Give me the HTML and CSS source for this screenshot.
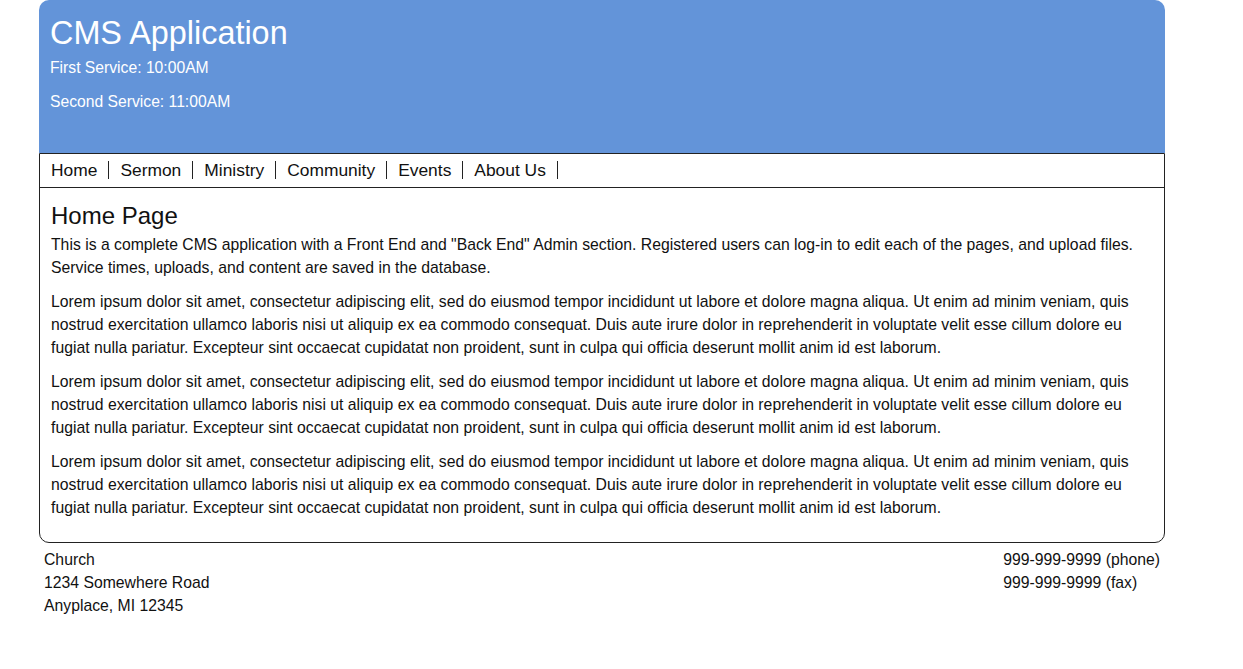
FILE: index.html
```html
<!DOCTYPE html>
<html lang="en">
<head>
<meta charset="utf-8">
<title>CMS Application</title>
<link rel="stylesheet" href="styles.css">
</head>
<body>
<div class="page">
  <header class="masthead">
    <h1 class="site-title">CMS Application</h1>
    <p class="service">First Service: 10:00AM</p>
    <p class="service">Second Service: 11:00AM</p>
  </header>
  <div class="frame">
    <nav class="menu">
      <a class="menu-item" href="#">Home</a><a class="menu-item" href="#">Sermon</a><a class="menu-item" href="#">Ministry</a><a class="menu-item" href="#">Community</a><a class="menu-item" href="#">Events</a><a class="menu-item" href="#">About Us</a>
    </nav>
    <main class="content">
      <h2 class="page-title">Home Page</h2>
      <p class="text">This is a complete CMS application with a Front End and "Back End" Admin section. Registered users can log-in to edit each of the pages, and upload files. Service times, uploads, and content are saved in the database.</p>
      <p class="text">Lorem ipsum dolor sit amet, consectetur adipiscing elit, sed do eiusmod tempor incididunt ut labore et dolore magna aliqua. Ut enim ad minim veniam, quis nostrud exercitation ullamco laboris nisi ut aliquip ex ea commodo consequat. Duis aute irure dolor in reprehenderit in voluptate velit esse cillum dolore eu fugiat nulla pariatur. Excepteur sint occaecat cupidatat non proident, sunt in culpa qui officia deserunt mollit anim id est laborum.</p>
      <p class="text">Lorem ipsum dolor sit amet, consectetur adipiscing elit, sed do eiusmod tempor incididunt ut labore et dolore magna aliqua. Ut enim ad minim veniam, quis nostrud exercitation ullamco laboris nisi ut aliquip ex ea commodo consequat. Duis aute irure dolor in reprehenderit in voluptate velit esse cillum dolore eu fugiat nulla pariatur. Excepteur sint occaecat cupidatat non proident, sunt in culpa qui officia deserunt mollit anim id est laborum.</p>
      <p class="text">Lorem ipsum dolor sit amet, consectetur adipiscing elit, sed do eiusmod tempor incididunt ut labore et dolore magna aliqua. Ut enim ad minim veniam, quis nostrud exercitation ullamco laboris nisi ut aliquip ex ea commodo consequat. Duis aute irure dolor in reprehenderit in voluptate velit esse cillum dolore eu fugiat nulla pariatur. Excepteur sint occaecat cupidatat non proident, sunt in culpa qui officia deserunt mollit anim id est laborum.</p>
    </main>
  </div>
  <footer class="footer">
    <div class="address">
      <div>Church</div>
      <div>1234 Somewhere Road</div>
      <div>Anyplace, MI 12345</div>
    </div>
    <div class="contact">
      <div>999-999-9999 (phone)</div>
      <div>999-999-9999 (fax)</div>
    </div>
  </footer>
</div>
</body>
</html>
```

FILE: styles.css
```css
html, body {
  margin: 0;
  padding: 0;
  background: #fff;
}

body {
  font-family: "Liberation Sans", Arial, Helvetica, sans-serif;
  color: #111;
}

.page {
  width: 1126px;
  margin-left: 39px;
}

.masthead {
  background: #6394d9;
  color: #fff;
  border-radius: 10px 10px 0 0;
  height: 153px;
  box-sizing: border-box;
  padding: 15px 11px 0;
}

.site-title {
  margin: 0 0 7px;
  font-size: 32.4px;
  line-height: 37px;
  font-weight: normal;
}

.service {
  margin: 0 0 16px;
  font-size: 15.7px;
  line-height: 18px;
}

.frame {
  border: 1px solid #222;
  border-radius: 0 0 10px 10px;
}

.menu {
  display: flex;
  align-items: center;
  height: 31px;
  padding-bottom: 2px;
  border-bottom: 1px solid #222;
}

.menu-item {
  font-size: 17.4px;
  line-height: 18px;
  color: #111;
  text-decoration: none;
  padding: 0 11px;
  border-right: 1px solid #222;
}

.content {
  padding: 14px 11px 12px;
}

.page-title {
  margin: 0 0 3px;
  font-size: 24px;
  line-height: 28px;
  font-weight: normal;
}

.text {
  margin: 0 0 11px;
  font-size: 15.75px;
  line-height: 23px;
}

.footer {
  display: flex;
  justify-content: space-between;
  padding: 5px 5px 0;
  font-size: 15.75px;
  line-height: 23px;
}
```
